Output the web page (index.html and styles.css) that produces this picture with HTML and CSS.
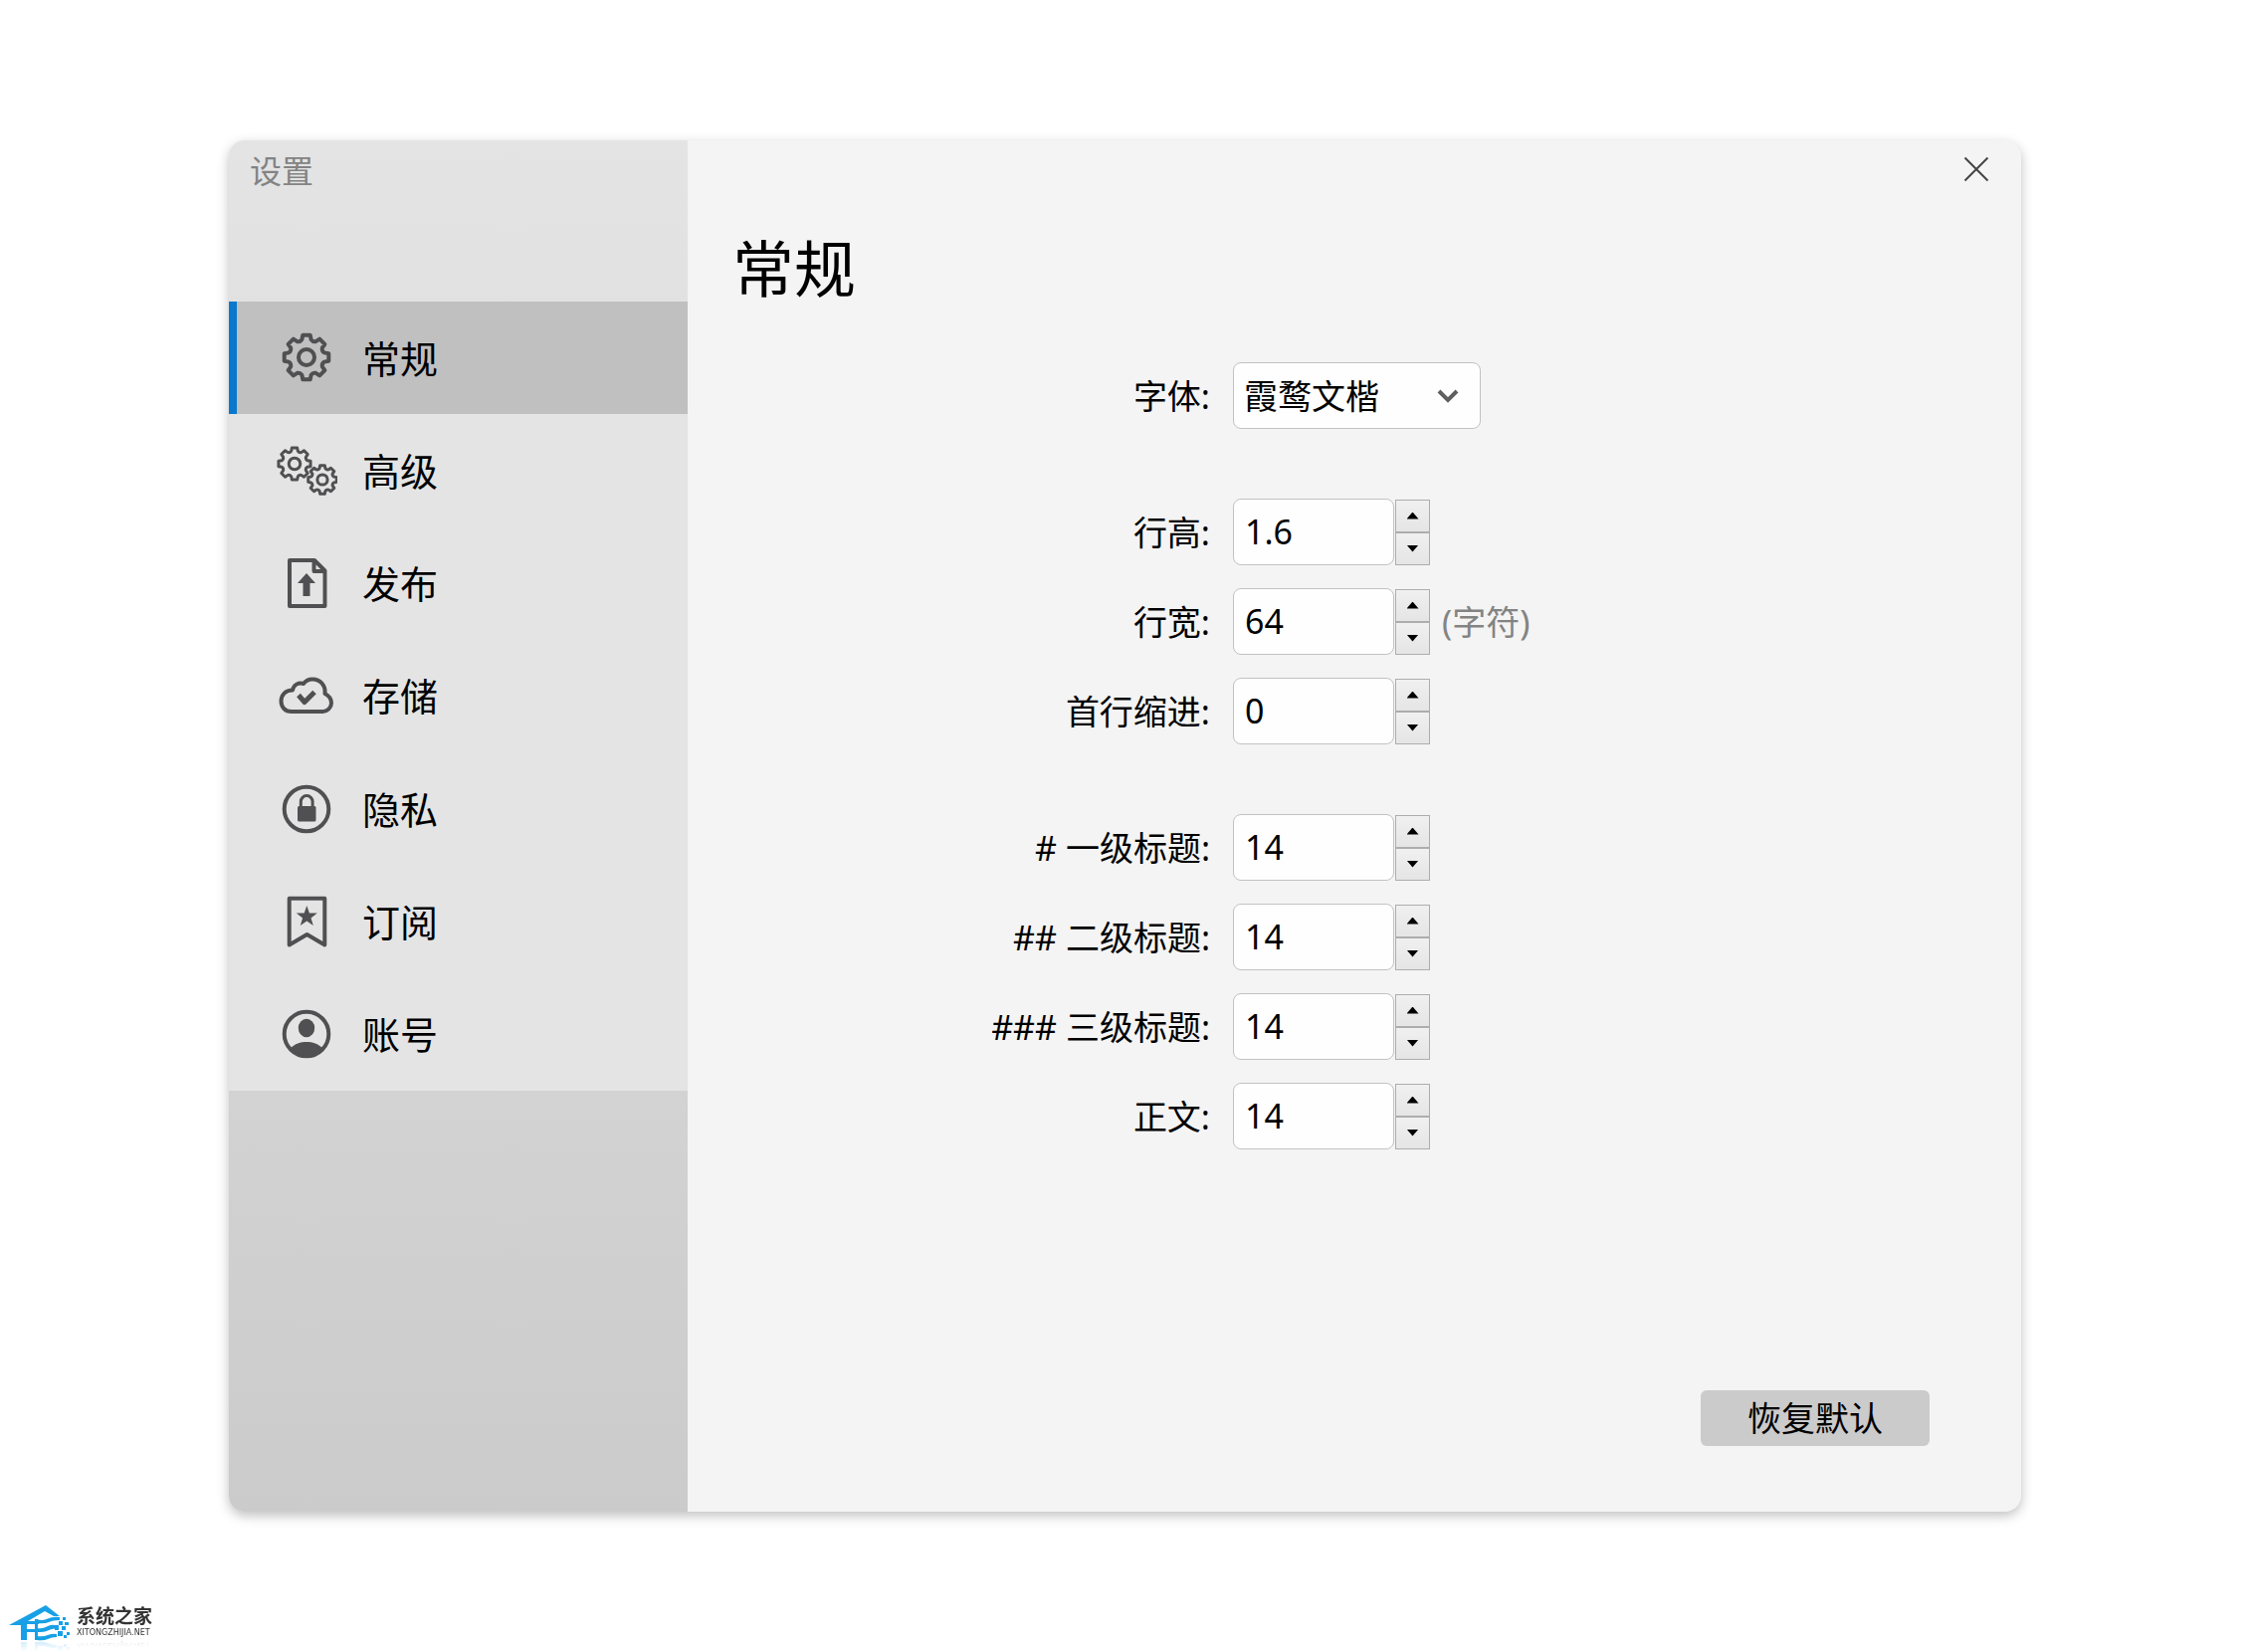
FILE: index.html
```html
<!DOCTYPE html>
<html lang="zh-CN">
<head>
<meta charset="utf-8">
<meta name="viewport" content="width=device-width, initial-scale=1">
<title>设置</title>
<link rel="stylesheet" href="styles.css">
</head>
<body>
<svg class="defs" aria-hidden="true">
  <symbol id="gear" viewBox="-25 -25 50 50" overflow="visible">
    <path vector-effect="non-scaling-stroke" d="M-3.7-22.3L3.7-22.3L4.6-17.8Q6.3-15.2 9.3-15.8L13.2-18.4L18.4-13.2L15.8-9.3Q15.2-6.3 17.8-4.6L22.3-3.7L22.3 3.7L17.8 4.6Q15.2 6.3 15.8 9.3L18.4 13.2L13.2 18.4L9.3 15.8Q6.3 15.2 4.6 17.8L3.7 22.3L-3.7 22.3L-4.6 17.8Q-6.3 15.2-9.3 15.8L-13.2 18.4L-18.4 13.2L-15.8 9.3Q-15.2 6.3-17.8 4.6L-22.3 3.7L-22.3-3.7L-17.8-4.6Q-15.2-6.3-15.8-9.3L-18.4-13.2L-13.2-18.4L-9.3-15.8Q-6.3-15.2-4.6-17.8Z"/>
    <circle vector-effect="non-scaling-stroke" r="8"/>
  </symbol>
</svg>

<div class="dialog" role="dialog" aria-label="设置">
  <aside class="sidebar">
    <div class="sidebar-title">设置</div>
    <nav class="nav">
      <a class="nav-item active" href="#general" aria-current="page">
        <svg class="icon" viewBox="0 0 62 56"><use href="#gear" x="6" y="2" width="50" height="50"/></svg>
        <span>常规</span>
      </a>
      <a class="nav-item" href="#advanced">
        <svg class="icon thin" viewBox="0 0 62 56"><use href="#gear" x="1" y="3" width="36" height="36"/><use href="#gear" x="31" y="21" width="32" height="32"/></svg>
        <span>高级</span>
      </a>
      <a class="nav-item" href="#publish">
        <svg class="icon" viewBox="0 0 62 56"><path d="M14 5H39L49.5 15.500V51H14ZM38.500 5V16H49.500"/><path class="solid" d="M31 18L40 28H34.500V41H27.500V28H22Z"/></svg>
        <span>发布</span>
      </a>
      <a class="nav-item" href="#storage">
        <svg class="icon" viewBox="0 0 62 56"><path d="M16 44C9 44 5.500 39 5.500 33.500C5.500 27 10 22.500 17 22.500C18 17 23 14.500 28 16C31 12 35 11.500 37 11.500C45 11.500 50.500 18 49.500 26C53.500 28 56 31 56 35.500C56 40 52 44 47.500 44Z"/><path class="tick" d="M23 27.500L29 34.500L39 24.500"/></svg>
        <span>存储</span>
      </a>
      <a class="nav-item" href="#privacy">
        <svg class="icon" viewBox="0 0 62 56"><circle cx="31" cy="28" r="22.300"/><rect class="solid" x="22" y="25" width="18.500" height="15.500" rx="1.500"/><path class="shackle" d="M25.300 26V20.500A5.900 5.900 0 0 1 37.100 20.500V26"/></svg>
        <span>隐私</span>
      </a>
      <a class="nav-item" href="#subscription">
        <svg class="icon" viewBox="0 0 62 56"><path d="M13.700 4.700H49.300V51.500L31.500 41L13.700 51.500Z"/><path class="solid" d="M31.300 12L33.900 19.400L41.800 19.600L35.500 24.400L37.800 31.900L31.300 27.400L24.800 31.900L27.100 24.400L20.800 19.600L28.700 19.400Z"/></svg>
        <span>订阅</span>
      </a>
      <a class="nav-item" href="#account">
        <svg class="icon" viewBox="0 0 62 56"><circle cx="31" cy="28" r="22.300"/><ellipse class="solid" cx="31" cy="22" rx="8.200" ry="9.300"/><path class="solid" d="M15 42.500C19 37.500 25 36 31 36S43 37.500 47 42.500A22 22 0 0 1 15 42.500Z"/></svg>
        <span>账号</span>
      </a>
    </nav>
  </aside>

  <main class="panel">
    <button class="close" type="button" aria-label="关闭">
      <svg viewBox="0 0 40 40"><path d="M8.500 8.500L31.500 31.500M31.500 8.500L8.500 31.500"/></svg>
    </button>
    <h1 class="heading">常规</h1>

    <form class="form">
      <div class="group">
        <div class="row">
          <label for="font">字体:</label>
          <div class="control select-box">
            <select id="font"><option>霞鹜文楷</option></select>
            <svg class="chevron" viewBox="0 0 24 16"><path d="M3 3L12 12L21 3"/></svg>
          </div>
        </div>
      </div>

      <div class="group">
        <div class="row">
          <label for="line-height">行高:</label>
          <div class="control">
            <input id="line-height" type="number" step="0.1" value="1.6">
            <div class="stepper"><button type="button" class="up" aria-label="增加"></button><button type="button" class="down" aria-label="减少"></button></div>
          </div>
        </div>
        <div class="row">
          <label for="line-width">行宽:</label>
          <div class="control">
            <input id="line-width" type="number" value="64">
            <div class="stepper"><button type="button" class="up" aria-label="增加"></button><button type="button" class="down" aria-label="减少"></button></div>
            <span class="unit">(字符)</span>
          </div>
        </div>
        <div class="row">
          <label for="indent">首行缩进:</label>
          <div class="control">
            <input id="indent" type="number" value="0">
            <div class="stepper"><button type="button" class="up" aria-label="增加"></button><button type="button" class="down" aria-label="减少"></button></div>
          </div>
        </div>
      </div>

      <div class="group">
        <div class="row">
          <label for="h1-size"># 一级标题:</label>
          <div class="control">
            <input id="h1-size" type="number" value="14">
            <div class="stepper"><button type="button" class="up" aria-label="增加"></button><button type="button" class="down" aria-label="减少"></button></div>
          </div>
        </div>
        <div class="row">
          <label for="h2-size">## 二级标题:</label>
          <div class="control">
            <input id="h2-size" type="number" value="14">
            <div class="stepper"><button type="button" class="up" aria-label="增加"></button><button type="button" class="down" aria-label="减少"></button></div>
          </div>
        </div>
        <div class="row">
          <label for="h3-size">### 三级标题:</label>
          <div class="control">
            <input id="h3-size" type="number" value="14">
            <div class="stepper"><button type="button" class="up" aria-label="增加"></button><button type="button" class="down" aria-label="减少"></button></div>
          </div>
        </div>
        <div class="row">
          <label for="body-size">正文:</label>
          <div class="control">
            <input id="body-size" type="number" value="14">
            <div class="stepper"><button type="button" class="up" aria-label="增加"></button><button type="button" class="down" aria-label="减少"></button></div>
          </div>
        </div>
      </div>
    </form>

    <button class="restore" type="button">恢复默认</button>
  </main>
</div>

<footer class="brand">
  <svg class="brand-mark" viewBox="0 0 61 36" aria-hidden="true">
    <path d="M0 20L37 0L51 11L45 11L36 6L19 16H30V19H18V24H27V27H18V35H12V20Z"/>
    <path d="M26 14H29V35H26Z"/>
    <path d="M28 14Q34 16 39 13.500T51 12V15Q44 15 40 17T28 18ZM28 23Q34 24 38 21.500T46 20V23.500Q42 24 39 25.500T28 27ZM28 31Q34 32 39 30T48 29V32Q43 32 39 34T28 35Z"/>
    <path d="M50 16H54V20H50ZM54 12H57V15H54ZM56 17H60V20H56ZM46 20H50V25H46ZM53 21H57V25H53ZM49 26H54V31H49ZM58 27H61V30H58ZM55 30H58V33H55Z"/>
  </svg>
  <div class="brand-text">
    <strong>系统之家</strong>
    <span>XITONGZHIJIA.NET</span>
  </div>
</footer>
</body>
</html>
```

FILE: styles.css
```css
* {
  box-sizing: border-box;
}

body {
  display: flex;
  flex-direction: column;
  min-height: 100vh;
  margin: 0;
  padding-top: 141px;
  background: #fff;
  color: #000;
  font-family: "Noto Sans", "Noto Sans CJK SC", sans-serif;
  font-size: 34px;
  line-height: 48px;
}

button,
input,
select {
  margin: 0;
  color: inherit;
  font: inherit;
}

.defs {
  position: absolute;
  width: 0;
  height: 0;
}

/* Dialog */
.dialog {
  display: flex;
  flex: 1;
  margin: 0 229px 0 230px;
  overflow: hidden;
  border-radius: 16px;
  background: #f4f4f4;
  box-shadow: 0 4px 12px rgba(0, 0, 0, 0.25);
}

/* Sidebar */
.sidebar {
  flex: 0 0 461px;
  background: linear-gradient(#e4e4e4, #cbcbcb);
}

.sidebar-title {
  height: 162px;
  padding: 7px 21px;
  color: #838383;
  font-size: 32px;
}

.nav {
  display: grid;
  grid-auto-rows: 1fr;
  min-height: 793px;
  background: #e4e4e4;
}

.nav-item {
  display: flex;
  align-items: center;
  gap: 25px;
  padding-left: 39px;
  border-left: 8px solid transparent;
  color: #000;
  font-size: 38px;
  text-decoration: none;
}

.nav-item.active {
  border-left-color: #0a78cc;
  background: #c0c0c0;
}

.icon {
  width: 62px;
  height: 56px;
  fill: none;
  stroke: #505052;
  stroke-width: 4;
  stroke-linejoin: round;
}

.icon.thin {
  stroke-width: 3;
}

.icon .solid {
  fill: #505052;
  stroke: none;
}

.icon .tick {
  stroke-width: 5;
}

.icon .shackle {
  stroke-width: 3;
}

/* Settings panel */
.panel {
  display: flex;
  flex: 1;
  flex-direction: column;
  min-width: 0;
  padding: 9px 0 66px;
}

.close {
  align-self: flex-end;
  width: 40px;
  height: 40px;
  margin-right: 25px;
  padding: 0;
  border: 0;
  background: none;
}

.close svg {
  display: block;
  fill: none;
  stroke: #444;
  stroke-width: 2;
}

.heading {
  margin: 40px 45px 54px;
  font-size: 62px;
  font-weight: 400;
  line-height: 80px;
}

.form {
  display: grid;
  gap: 70px;
}

.group {
  display: grid;
  gap: 23px;
}

.row {
  display: grid;
  grid-template-columns: 137fr 198fr;
  align-items: center;
}

.row label {
  padding-right: 23px;
  text-align: right;
  white-space: nowrap;
}

.control {
  display: flex;
  align-items: center;
}

.control input,
.control select {
  height: 67px;
  border: 1px solid #c2c2c2;
  border-radius: 8px;
  background: #fefefe;
  appearance: none;
}

.control input {
  width: 162px;
  padding: 0 11px 2px;
  appearance: textfield;
}

.control input::-webkit-inner-spin-button {
  appearance: none;
}

.control select {
  width: 249px;
  padding: 0 10px;
}

.select-box {
  position: relative;
  justify-self: start;
}

.chevron {
  position: absolute;
  right: 21px;
  width: 24px;
  height: 16px;
  fill: none;
  stroke: #5f5f5f;
  stroke-width: 4;
  pointer-events: none;
}

.stepper {
  display: grid;
  width: 35px;
  margin-left: 1px;
}

.stepper button {
  display: grid;
  place-items: center;
  height: 33px;
  padding: 0;
  border: 1px solid #adadad;
  background: linear-gradient(#f0f0f0, #e5e5e5);
}

.stepper button::before {
  width: 12px;
  height: 7px;
  background: #000;
  content: "";
}

.stepper .up::before {
  clip-path: polygon(50% 0, 100% 100%, 0 100%);
}

.stepper .down::before {
  clip-path: polygon(0 0, 100% 0, 50% 100%);
}

.unit {
  margin-left: 12px;
  color: #838383;
}

.restore {
  align-self: flex-end;
  width: 230px;
  height: 56px;
  margin: auto 92px 0 0;
  padding: 0;
  border: 0;
  border-radius: 6px;
  background: #cbcbcb;
}

/* Site mark */
.brand {
  display: flex;
  align-items: flex-start;
  gap: 7px;
  height: 141px;
  padding: 94px 0 0 9px;
}

.brand-mark {
  width: 61px;
  height: 36px;
  fill: #18a0e6;
  -webkit-box-reflect: below 0 linear-gradient(transparent 70%, rgba(0, 0, 0, 0.2));
}

.brand-text {
  display: grid;
  color: #333;
  -webkit-box-reflect: below 0 linear-gradient(transparent 75%, rgba(0, 0, 0, 0.2));
}

.brand-text strong {
  font-size: 19px;
  line-height: 22px;
}

.brand-text span {
  font-family: "DejaVu Sans", sans-serif;
  font-size: 8px;
  line-height: 12px;
}
```
